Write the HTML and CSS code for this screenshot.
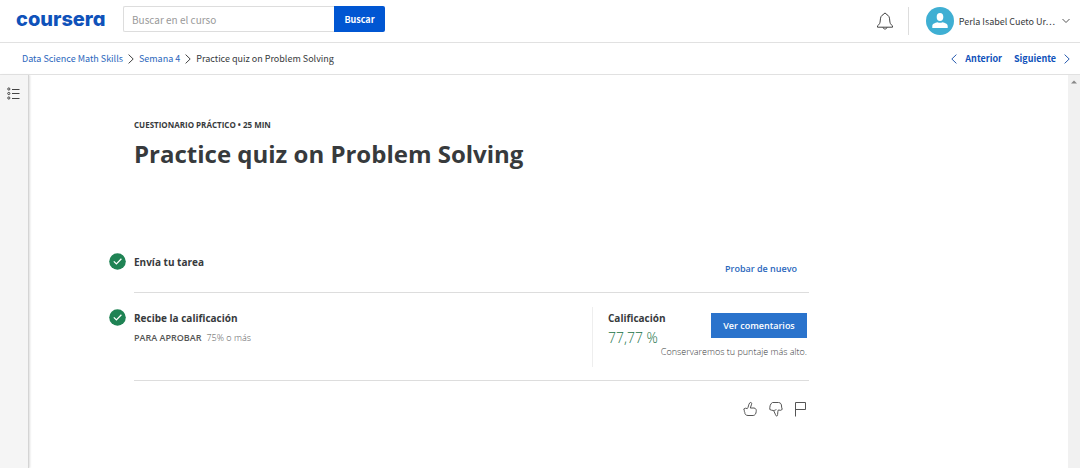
FILE: index.html
```html
<!DOCTYPE html>
<html lang="es">
<head>
<meta charset="utf-8">
<meta name="viewport" content="width=device-width, initial-scale=1">
<title>Practice quiz on Problem Solving | Coursera</title>
<link rel="stylesheet" href="styles.css">
</head>
<body>
<header class="topbar">
  <a class="logo" href="#">coursera</a>
  <form class="search" role="search">
    <input class="search-input" type="search" placeholder="Buscar en el curso" aria-label="Buscar en el curso">
    <button class="search-button" type="submit">Buscar</button>
  </form>
  <div class="account">
    <button class="icon-button" type="button" aria-label="Notificaciones">
      <svg width="18" height="20" viewBox="0 0 18 20" fill="none" stroke="#444"><path d="M7.500 3.500C7.500 1.800 10.500 1.800 10.500 3.500C13 4.300 13.500 6.500 13.700 9C13.900 12.500 14.500 13.300 16.500 14.800V16.200H1.500V14.800C3.500 13.300 4.100 12.500 4.300 9C4.500 6.500 5 4.300 7.500 3.500ZM7 16.300C7.200 18.600 10.800 18.600 11 16.300"/></svg>
    </button>
    <button class="profile" type="button">
      <svg width="28" height="28" viewBox="0 0 28 28"><circle cx="14" cy="14" r="14" fill="#3fafd3"/><ellipse cx="14" cy="10" rx="3.300" ry="4" fill="#fff"/><path d="M6.300 21V19C6.300 16.600 9 15.900 11.500 15.200Q14 16.500 16.500 15.200C19 15.900 21.700 16.600 21.700 19V21Z" fill="#fff"/></svg>
      <span class="profile-name">Perla Isabel Cueto Ur…</span>
      <svg width="8" height="6" viewBox="0 0 8 6" fill="none" stroke="#555"><path d="M.5 1 4 4.500 7.500 1"/></svg>
    </button>
  </div>
</header>
<div class="subbar">
  <nav class="crumbs" aria-label="Ruta">
    <a href="#">Data Science Math Skills</a>
    <svg width="6" height="10" viewBox="0 0 6 10" fill="none" stroke="#444"><path d="M.6.6 5.200 5 .6 9.400"/></svg>
    <a href="#">Semana 4</a>
    <svg width="6" height="10" viewBox="0 0 6 10" fill="none" stroke="#444"><path d="M.6.6 5.200 5 .6 9.400"/></svg>
    <span>Practice quiz on Problem Solving</span>
  </nav>
  <nav class="pager" aria-label="Elementos">
    <a href="#"><svg width="6" height="10" viewBox="0 0 6 10" fill="none" stroke="#2a5db0"><path d="M5.400.6.800 5 5.400 9.400"/></svg>Anterior</a>
    <a href="#">Siguiente<svg width="6" height="10" viewBox="0 0 6 10" fill="none" stroke="#2a5db0"><path d="M.6.6 5.200 5 .6 9.400"/></svg></a>
  </nav>
</div>
<div class="shell">
  <aside class="rail">
    <button class="icon-button" type="button" aria-label="Abrir menú">
      <svg width="13" height="13" viewBox="0 0 13 13" fill="none" stroke="#444"><circle cx="1.800" cy="2" r="1.100"/><circle cx="1.800" cy="6.500" r="1.100"/><circle cx="1.800" cy="11" r="1.100"/><path d="M5 2.500H12.500M5 6.500H12.500M5 11.500H12.500"/></svg>
    </button>
  </aside>
  <main class="content">
    <p class="kicker">CUESTIONARIO PRÁCTICO • 25 MIN</p>
    <h1 class="title">Practice quiz on Problem Solving</h1>
    <section class="step submit">
      <svg class="check" width="17" height="17" viewBox="0 0 17 17"><circle cx="8.500" cy="8.500" r="8.300" fill="#1f8354"/><path d="M4.800 8.400 7.400 10.900 12.400 5.800" fill="none" stroke="#fff" stroke-width="1.300"/></svg>
      <div class="step-body">
        <h2 class="step-title">Envía tu tarea</h2>
        <a class="retry" href="#">Probar de nuevo</a>
      </div>
    </section>
    <section class="step">
      <svg class="check" width="17" height="17" viewBox="0 0 17 17"><circle cx="8.500" cy="8.500" r="8.300" fill="#1f8354"/><path d="M4.800 8.400 7.400 10.900 12.400 5.800" fill="none" stroke="#fff" stroke-width="1.300"/></svg>
      <div class="step-body graded">
        <div class="requirement">
          <h2 class="step-title">Recibe la calificación</h2>
          <p class="pass"><strong>PARA APROBAR</strong><span>75% o más</span></p>
        </div>
        <div class="result">
          <div class="grade">
            <h3 class="step-title">Calificación</h3>
            <p class="score">77,77 %</p>
          </div>
          <button class="feedback" type="button">Ver comentarios</button>
          <p class="note">Conservaremos tu puntaje más alto.</p>
        </div>
      </div>
    </section>
    <div class="reactions">
      <button class="icon-button" type="button" aria-label="Me gusta">
        <svg width="14" height="16" viewBox="0 0 14 16" fill="none" stroke="#555"><path d="M.7 8 2.500 7.200 4.300 7.600C5.500 6.500 5.300 3.500 6.800 1.800C8 .9 9 1.900 8.600 3.200L7.300 7H11C13 7.200 13.500 9 13.200 10.500C13 12.800 12 14.300 10.200 14.500H5C2.700 14.400 1.800 13.200 1.800 11.500C1 10.500 1.700 9.200.7 8Z"/></svg>
      </button>
      <button class="icon-button" type="button" aria-label="No me gusta">
        <svg width="14" height="16" viewBox="0 0 14 16" fill="none" stroke="#555"><path d="M.8 8.500C.6 5.500 1.300 2.500 3.500 1.500H9.500C12 1.700 12.500 3.500 12.500 5C12.800 6.500 12.600 7.500 13.300 8.300L11.700 9.300 9.300 9C8.500 10.500 8.900 13.500 8.300 14.700C7.300 15.500 6.500 14.400 6.300 13.200L4.600 9.500C6 9.500 7 8.500 7.400 8.500M4.600 9.500C3 9.500 2 9 .8 8.500"/></svg>
      </button>
      <button class="icon-button" type="button" aria-label="Reportar">
        <svg width="12" height="16" viewBox="0 0 12 16" fill="none" stroke="#555"><path d="M.5 15.500V1.500H10.500V8.500H.5"/></svg>
      </button>
    </div>
  </main>
  <div class="scroll-track" aria-hidden="true">
    <svg width="6" height="4" viewBox="0 0 6 4"><path d="M0 3.500 3 .5 6 3.500Z" fill="#888"/></svg>
  </div>
</div>
</body>
</html>
```
FILE: styles.css
```css
* {
  box-sizing: border-box;
}

body {
  display: flex;
  flex-direction: column;
  min-height: 100vh;
  margin: 0;
  background: #fff;
  color: #373a3c;
  font-family: "Open Sans", "Noto Sans", sans-serif;
}

h1, h2, h3, p {
  margin: 0;
}

a {
  color: inherit;
  text-decoration: none;
}

button {
  padding: 0;
  border: 0;
  background: none;
  color: inherit;
  font: inherit;
  cursor: pointer;
}

svg {
  display: block;
  flex: none;
}

.icon-button {
  display: block;
}

.topbar,
.subbar {
  display: flex;
  align-items: center;
  border-bottom: 1px solid #e1e1e1;
  font-family: "Noto Sans CJK SC", "Open Sans", sans-serif;
}

.topbar {
  height: 43px;
  padding: 0 10px 4px 16px;
}

.logo {
  width: 107px;
  color: #0f52ba;
  font-family: Inter, sans-serif;
  font-feature-settings: "cv11";
  font-size: 20px;
  font-weight: 800;
  line-height: 24px;
}

.search {
  display: flex;
  width: 262px;
  height: 26px;
}

.search-input {
  flex: 1;
  min-width: 0;
  padding: 0 8px;
  border: 1px solid #ddd;
  border-right: 0;
  border-radius: 2px 0 0 2px;
  appearance: none;
  font: 10px "Noto Sans CJK SC", sans-serif;
}

.search-input::placeholder {
  color: #999;
}

.search-button {
  width: 51px;
  border-radius: 0 2px 2px 0;
  background: #0056d2;
  color: #fff;
  font-size: 9px;
  font-weight: 700;
}

.account {
  display: flex;
  align-items: center;
  gap: 14px;
  height: 28px;
  margin-left: auto;
  padding-top: 4px;
}

.profile {
  display: flex;
  align-items: center;
  gap: 5px;
  padding-left: 17px;
  border-left: 1px solid #ddd;
  font-size: 9px;
}

.profile-name {
  margin-right: 2px;
}

.subbar {
  justify-content: space-between;
  height: 32px;
  padding: 0 10px 0 22px;
  font-size: 9px;
}

.crumbs,
.pager,
.pager a {
  display: flex;
  align-items: center;
}

.crumbs {
  gap: 5px;
}

.crumbs a {
  color: #2a66bc;
}

.pager {
  gap: 12px;
  color: #0f52ba;
  font-weight: 700;
}

.pager a {
  gap: 8px;
}

.shell {
  display: flex;
  flex: 1;
}

.rail {
  width: 29px;
  padding: 12px 7px;
  border-right: 1px solid #d4d4d4;
  background: #f5f5f5;
  box-shadow: 1px 0 2px #ddd;
}

.content {
  flex: 1;
  padding: 42px 24px 24px 80px;
}

.kicker {
  padding-left: 25px;
  font-size: 8px;
  font-weight: 700;
  line-height: 16px;
}

.title {
  padding-left: 25px;
  font-size: 24px;
  font-weight: 700;
  line-height: 42px;
}

.step {
  display: flex;
  gap: 8px;
  max-width: 700px;
}

.submit {
  margin-top: 78px;
}

.step + .step {
  margin-top: 16px;
}

.step-body {
  display: flex;
  flex: 1;
  justify-content: space-between;
  border-bottom: 1px solid #ddd;
}

.step-title {
  font-size: 10px;
  font-weight: 700;
  line-height: 18px;
}

.retry {
  padding: 7px 12px 14px 0;
  color: #2a66bc;
  font-size: 9px;
  font-weight: 600;
  line-height: 18px;
}

.graded {
  padding-bottom: 13px;
}

.pass {
  display: flex;
  gap: 5px;
  margin-top: 3px;
  color: #555;
  font-size: 9px;
  line-height: 16px;
}

.pass span {
  font-weight: 300;
}

.pass strong {
  font-weight: 600;
}

.check {
  margin-bottom: auto;
}

.result {
  display: grid;
  grid-template-columns: 1fr auto;
  align-content: start;
  width: 217px;
  padding: 0 2px 0 15px;
  margin-top: -2px;
  min-height: 60px;
  border-left: 1px solid #eee;
}

.grade {
  padding-top: 2px;
}

.score {
  color: #177245;
  font-size: 14px;
  font-weight: 300;
  line-height: 22px;
}

.feedback {
  width: 96px;
  height: 25px;
  margin-top: 6px;
  background: #2a73cc;
  color: #fff;
  font-size: 9px;
  font-weight: 600;
}

.note {
  grid-column: 1 / -1;
  margin-top: -4px;
  font-size: 9px;
  font-weight: 300;
  line-height: 14px;
  text-align: right;
}

.reactions {
  display: flex;
  justify-content: flex-end;
  gap: 12px;
  max-width: 698px;
  margin-top: 20px;
}

.scroll-track {
  display: flex;
  justify-content: center;
  width: 12px;
  padding-top: 5px;
  background: #f1f1f1;
}
```
